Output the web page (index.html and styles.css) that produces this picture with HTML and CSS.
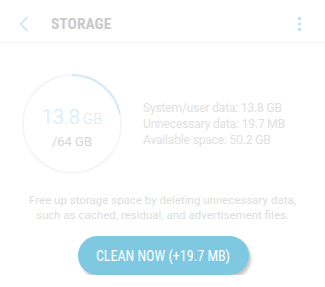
FILE: index.html
```html
<!DOCTYPE html>
<html>
<head>
<meta charset="utf-8">
<link rel="stylesheet" href="styles.css">
</head>
<body>
<div class="header">
  <svg class="back" width="10" height="16" viewBox="0 0 10 16"><path d="M8.5 1 L1.5 8 L8.5 15" fill="none" stroke="#bfe0ef" stroke-width="1.2"/></svg>
  <div class="title">STORAGE</div>
  <div class="kebab"><span></span><span></span><span></span></div>
</div>
<div class="main">
  <div class="gauge">
    <svg class="ring" width="100" height="100" viewBox="0 0 100 100">
      <circle cx="50" cy="50" r="49" fill="none" stroke="#f3f5f6" stroke-width="2"/>
      <path d="M50 1 A49 49 0 0 1 97.8 39.2" fill="none" stroke="#d3ebf5" stroke-width="2"/>
    </svg>
    <div class="used"><span class="num">13.8</span><span class="unit">GB</span></div>
    <div class="total">/64 GB</div>
  </div>
  <div class="stats">
    <div>System/user data: 13.8 GB</div>
    <div>Unnecessary data: 19.7 MB</div>
    <div>Available space: 50.2 GB</div>
  </div>
</div>
<p class="desc">Free up storage space by deleting unnecessary data,<br>such as cached, residual, and advertisement files.</p>
<div class="action"><button class="clean">CLEAN NOW (+19.7 MB)</button></div>
</body>
</html>
```
FILE: styles.css
```css
html, body {
  margin: 0;
  padding: 0;
  background: #ffffff;
  font-family: Roboto, "Liberation Sans", sans-serif;
}
.header {
  height: 43px;
  border-bottom: 1px solid #f4f4f4;
  display: flex;
  align-items: center;
  padding: 6px 24px 0 19px;
  box-sizing: border-box;
}
.back {
  display: block;
}
.title {
  margin-left: 22px;
  font-family: "Roboto Condensed", Roboto, sans-serif;
  font-size: 15.5px;
  font-weight: 700;
  color: #c9c9c9;
  flex: 1;
}
.kebab {
  display: flex;
  flex-direction: column;
  gap: 3px;
}
.kebab span {
  width: 2.6px;
  height: 2.6px;
  border-radius: 50%;
  background: #b3dcec;
}
.main {
  display: flex;
  align-items: center;
  padding: 31px 0 0 22px;
  gap: 21px;
}
.gauge {
  width: 100px;
  height: 100px;
  position: relative;
  display: flex;
  flex-direction: column;
  align-items: center;
  justify-content: center;
}
.ring {
  position: absolute;
  left: 0;
  top: 0;
}
.used {
  color: #d3ebf6;
  font-weight: 300;
  line-height: 20px;
  margin-top: 9px;
}
.num {
  font-size: 20px;
}
.unit {
  font-size: 15px;
  margin-left: 3px;
}
.total {
  color: #d6d6d6;
  font-size: 13px;
  line-height: 16px;
  margin-top: 5px;
}
.stats {
  color: #e0e0e0;
  font-size: 12px;
  letter-spacing: -0.15px;
  line-height: 16px;
}
.desc {
  margin: 19px 0 0;
  text-align: center;
  color: #dddddd;
  font-size: 11.5px;
  line-height: 15px;
}
.action {
  display: flex;
  justify-content: center;
  margin-top: 13px;
  padding-left: 1px;
}
.clean {
  width: 171px;
  height: 39px;
  border: none;
  border-radius: 20px;
  background: #7ec8e1;
  color: #ffffff;
  font-family: "Roboto Condensed", Roboto, sans-serif;
  font-size: 14px;
  box-shadow: 2px 3px 3px rgba(0,0,0,0.22);
  padding: 0;
}
```
